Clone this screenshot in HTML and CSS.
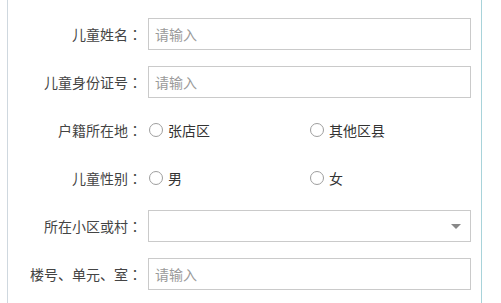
FILE: index.html
```html
<!DOCTYPE html>
<html lang="zh-CN">
<head>
    <meta charset="UTF-8">
    <meta name="viewport" content="width=device-width, initial-scale=1.0">
    <title>儿童信息登记</title>
    <link rel="stylesheet" href="styles.css">
</head>
<body>
    <div class="panel">
        <form class="form">
            <div class="row">
                <label class="label">儿童姓名<span class="colon" lang="zh-TW">：</span></label>
                <div class="field"><input class="input" type="text" placeholder="请输入"></div>
            </div>
            <div class="row">
                <label class="label">儿童身份证号<span class="colon" lang="zh-TW">：</span></label>
                <div class="field"><input class="input" type="text" placeholder="请输入"></div>
            </div>
            <div class="row">
                <label class="label">户籍所在地<span class="colon" lang="zh-TW">：</span></label>
                <div class="field radios">
                    <span class="option"><i class="radio"></i>张店区</span>
                    <span class="option"><i class="radio"></i>其他区县</span>
                </div>
            </div>
            <div class="row">
                <label class="label">儿童性别<span class="colon" lang="zh-TW">：</span></label>
                <div class="field radios">
                    <span class="option"><i class="radio"></i>男</span>
                    <span class="option"><i class="radio"></i>女</span>
                </div>
            </div>
            <div class="row">
                <label class="label">所在小区或村<span class="colon" lang="zh-TW">：</span></label>
                <div class="field">
                    <div class="select"><span class="caret"></span></div>
                </div>
            </div>
            <div class="row">
                <label class="label">楼号、单元、室<span class="colon" lang="zh-TW">：</span></label>
                <div class="field"><input class="input" type="text" placeholder="请输入"></div>
            </div>
        </form>
    </div>
</body>
</html>
```

FILE: styles.css
```css
* {
    margin: 0;
    padding: 0;
    box-sizing: border-box;
}
body {
    font-family: "Noto Sans CJK SC", "Liberation Sans", sans-serif;
    font-size: 14px;
    color: #444;
    background: #fff;
}
.panel {
    width: 475px;
    height: 303px;
    margin-left: 7px;
    border-left: 1px solid #cfd8df;
    border-right: 1px solid #a8d3da;
}
.form {
    display: flex;
    flex-direction: column;
    gap: 16px;
    padding-top: 18px;
}
.row {
    display: flex;
    align-items: center;
    height: 32px;
}
.label {
    width: 134px;
    text-align: right;
    white-space: nowrap;
    color: #444;
}
/* 冒号居中显示 */
.colon {
    font-family: "Noto Sans CJK TC", sans-serif;
}
.field {
    width: 323px;
    margin-left: 6px;
    height: 32px;
}
.input {
    width: 100%;
    height: 32px;
    border: 1px solid #cacaca;
    padding: 0 6px;
    font-family: inherit;
    font-size: 14px;
    color: #333;
    outline: none;
}
.input::placeholder {
    color: #9a9a9a;
}
.radios {
    display: flex;
    align-items: center;
}
.option {
    width: 161px;
    display: flex;
    align-items: center;
    color: #333;
}
.radio {
    width: 14px;
    height: 14px;
    margin: 0 5px 0 1px;
    border: 1px solid #9e9e9e;
    border-radius: 50%;
}
.select {
    position: relative;
    height: 32px;
    border: 1px solid #cacaca;
}
.caret {
    position: absolute;
    right: 9px;
    top: 13px;
    width: 0;
    height: 0;
    border-left: 5px solid transparent;
    border-right: 5px solid transparent;
    border-top: 5px solid #888;
}
```
